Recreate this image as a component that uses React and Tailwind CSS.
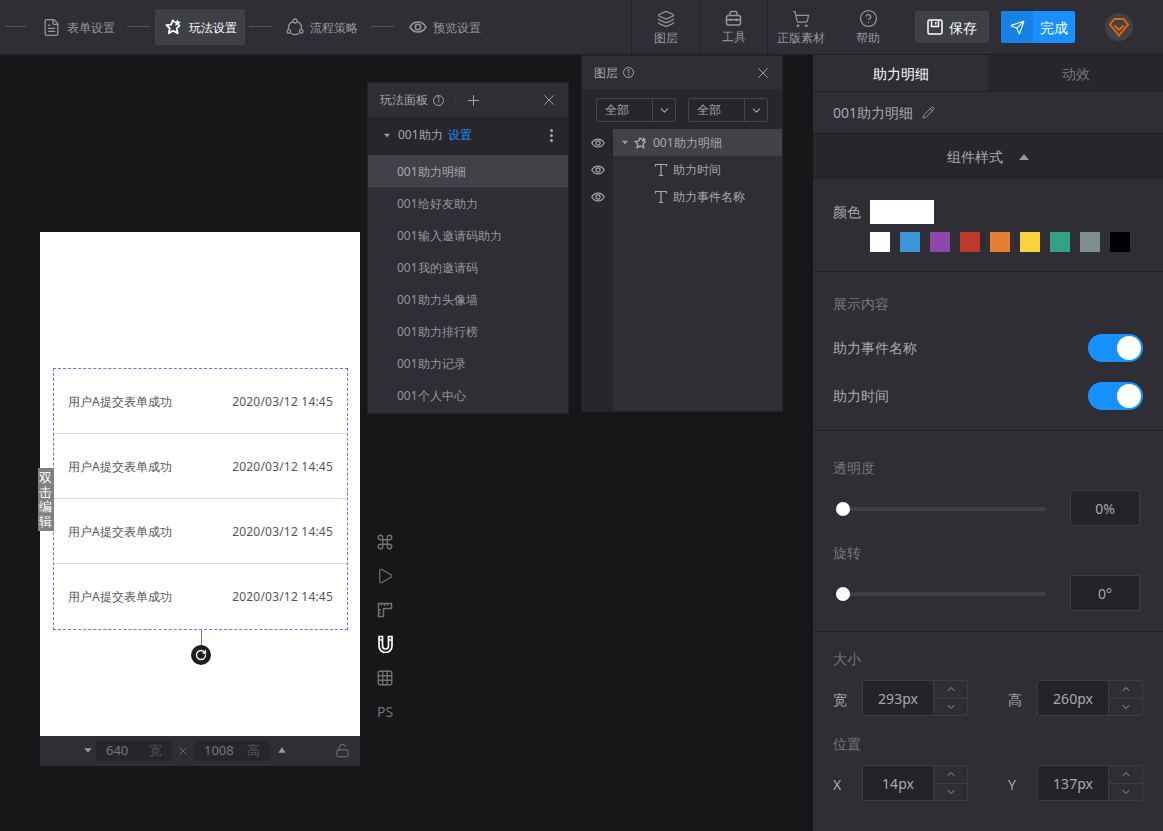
import { ChevronDown, ChevronUp, CircleHelp, Command, FileText, Grid3x3, Layers, LockOpen, Pencil, Play, Plus, RotateCw, Send, ShoppingCart, X } from 'lucide-react'

const FONT = "font-['Liberation_Sans','Noto_Sans_CJK_SC',sans-serif]"

const STEPS = [
  { label: '表单设置', icon: <FileText size={19} strokeWidth={1.6} />, x: 42 },
  { label: '玩法设置', icon: <StarIcon size={18} />, x: 165, active: true },
  { label: '流程策略', icon: <FlowIcon />, x: 286 },
  { label: '预览设置', icon: <EyeIcon size={18} />, x: 409 },
]

const TOOLS = [
  { label: '图层', icon: <Layers size={18} strokeWidth={1.6} />, w: 'w-[68px]' },
  { label: '工具', icon: <ToolboxIcon />, w: 'w-[68px]' },
  { label: '正版素材', icon: <ShoppingCart size={18} strokeWidth={1.6} />, w: 'w-[67px]' },
  { label: '帮助', icon: <CircleHelp size={19} strokeWidth={1.6} />, w: 'w-[68px]' },
]

const PLAYS = ['001给好友助力', '001输入邀请码助力', '001我的邀请码', '001助力头像墙', '001助力排行榜', '001助力记录', '001个人中心']

const SWATCHES = ['bg-white', 'bg-[#3b97d8]', 'bg-[#8e48ac]', 'bg-[#bf392c]', 'bg-[#e67e2f]', 'bg-[#fed23f]', 'bg-[#35a085]', 'bg-[#7f8d8d]', 'bg-black']

function StarIcon({ size }) {
  return (
    <svg width={size} height={size} viewBox="0 0 18 18" fill="none" stroke="currentColor" strokeWidth="1.8" strokeLinejoin="round">
      <path d="M9.5 4.2 7.8 2.4 6 6.6 1.4 7.1 4.8 10.3 3.8 15.3 8.2 12.8 12.6 15.3 11.7 10.3 15 7.2" />
      <path d="M12.4 1.4 13.4 3.6 15.9 3.9 14.1 5.6 14.6 8 12.4 6.8 10.2 8 10.7 5.6 8.9 3.9 11.4 3.6z" fill="currentColor" stroke="none" />
    </svg>
  )
}

function EyeIcon({ size }) {
  return (
    <svg width={size} height={size} viewBox="0 0 18 18" fill="none" stroke="currentColor" strokeWidth="1.5">
      <path d="M1 9c2-3.4 4.700-5 8-5s6 1.600 8 5c-2 3.400-4.700 5-8 5s-6-1.600-8-5z" />
      <circle cx="9" cy="9" r="2.700" />
    </svg>
  )
}

function FlowIcon() {
  return (
    <svg width="18" height="18" viewBox="0 0 18 18" fill="none" stroke="currentColor" strokeWidth="1.3">
      <path d="M6.600 3.600A6.800 6.800 0 0 0 2.600 11" />
      <path d="M11.400 3.600A6.800 6.800 0 0 1 15.400 11" />
      <path d="M5 15.200a7 7 0 0 0 8 0" />
      <circle cx="9" cy="3" r="2" />
      <circle cx="2.800" cy="13.400" r="1.800" />
      <circle cx="15.200" cy="13.400" r="1.800" />
    </svg>
  )
}

function ToolboxIcon() {
  return (
    <svg width="17" height="17" viewBox="0 0 17 17" fill="none" stroke="currentColor" strokeWidth="1.500">
      <rect x="1.500" y="5.500" width="14" height="9.500" rx="2" />
      <path d="M5 5.500V3.200A1.700 1.700 0 0 1 6.700 1.500h3.600A1.700 1.700 0 0 1 12 3.200v2.300" />
      <path d="M1.500 9.700h14M5.500 8.500v2.400M11.500 8.500v2.400" />
    </svg>
  )
}

function SaveIcon() {
  return (
    <svg width="16" height="16" viewBox="0 0 16 16" fill="none" stroke="currentColor" strokeWidth="1.500">
      <path d="M2.500 1h11A1.500 1.500 0 0 1 15 2.500v11a1.500 1.500 0 0 1-1.500 1.500h-11A1.500 1.500 0 0 1 1 13.500v-11A1.500 1.500 0 0 1 2.500 1z" />
      <path d="M4.500 1v6.500h7V1" />
      <path d="M8.800 3v2.500" />
    </svg>
  )
}

function LogoIcon() {
  return (
    <svg width="22" height="22" viewBox="0 0 22 22" fill="none" stroke="#e8650f" strokeWidth="1.900" strokeLinejoin="miter">
      <path d="M6.500 3h9L20 8.500 11 19.500 2 8.500z" />
      <path d="M6.500 9.500 11 14l4.500-4.500" />
    </svg>
  )
}

function RulerIcon() {
  return (
    <svg width="16" height="18" viewBox="0 0 16 18" fill="none" stroke="currentColor" strokeWidth="1.500">
      <path d="M1.500 2.500h13v5H6.500v8h-5z" />
      <path d="M4.500 2.500v2M7.500 2.500v2.500M10.500 2.500v2M1.500 9h2.500M1.500 12h2" />
    </svg>
  )
}

function MagnetIcon() {
  return (
    <svg width="15" height="18" viewBox="0 0 15 18" fill="none" stroke="currentColor" strokeWidth="1.700">
      <path d="M1 1.500h3.500v9.500a3 3 0 0 0 6 0V1.500H14v9.500a6.500 6.500 0 0 1-13 0z" />
      <path d="M1 5h3.500M10.500 5H14" />
    </svg>
  )
}

function TextIcon() {
  return (
    <svg width="14" height="14" viewBox="0 0 14 14" fill="none" stroke="currentColor" strokeWidth="1.200">
      <path d="M1.500 3.500V1.500h11v2M7 1.500v11M4.800 12.500h4.400" />
    </svg>
  )
}

function Caret({ up, className = '' }) {
  return (
    <span className={`inline-block w-0 h-0 border-x-[4px] border-x-transparent ${up ? 'border-b-[6px] border-b-[#9a9a9e]' : 'border-t-[5px] border-t-[#9a9a9e]'} ${className}`} />
  )
}

function InfoDot() {
  return (
    <span className="w-[11px] h-[11px] rounded-full border border-[#a5a5a8] flex items-center justify-center text-[8px] leading-none text-[#a5a5a8]">1</span>
  )
}

function Toggle({ label, y }) {
  return (
    <div className="absolute left-[20px] right-[20px] flex items-center justify-between" style={{ top: y }}>
      <span className="text-[14px] text-[#a9a9ac] -mt-[2px]">{label}</span>
      <span className="w-[55px] h-[28px] rounded-full bg-[#1890ff] relative">
        <span className="absolute right-[2px] top-[2px] w-[24px] h-[24px] rounded-full bg-white" />
      </span>
    </div>
  )
}

function SliderRow({ label, y, value }) {
  return (
    <>
      <span className="absolute left-[20px] text-[14px] text-[#77777b]" style={{ top: y - 2 }}>{label}</span>
      <div className="absolute left-[23px] w-[210px] h-[4px] rounded-full bg-[#3f3f45]" style={{ top: y + 48 }}>
        <span className="absolute left-0 -top-[5px] w-[14px] h-[14px] rounded-full bg-white" />
      </div>
      <div className="absolute left-[257px] w-[70px] h-[36px] bg-[#232328] border border-[#3d3d43] flex items-center justify-center text-[14px] text-[#a9a9ac]" style={{ top: y + 31 }}>
        {value}
      </div>
    </>
  )
}

function NumberBox({ value, x, y }) {
  return (
    <div className="absolute w-[106px] h-[36px] flex border border-[#3d3d43] rounded-[2px] overflow-hidden" style={{ left: x, top: y }}>
      <span className="w-[70px] bg-[#232328] flex items-center justify-center text-[14px] text-[#a9a9ac]">{value}</span>
      <span className="flex-1 flex flex-col border-l border-[#3d3d43] text-[#9a9a9e]">
        <span className="flex-1 flex items-center justify-center border-b border-[#3d3d43]"><ChevronUp size={12} /></span>
        <span className="flex-1 flex items-center justify-center"><ChevronDown size={12} /></span>
      </span>
    </div>
  )
}

function PhoneRow({ last }) {
  return (
    <div className={`h-[65px] flex items-center justify-between pl-[14px] pr-[14px] text-[12px] text-[#555555] ${last ? '' : 'pt-px border-b border-[#d9d9d9]'}`}>
      <span>用户A提交表单成功</span>
      <span className="tracking-[0.2px]">2020/03/12 14:45</span>
    </div>
  )
}

function SelectBox({ x }) {
  return (
    <div className="absolute top-[42px] w-[80px] h-[24px] flex border border-[#45454a] rounded-[2px] text-[12px] text-[#a9a9ac]" style={{ left: x }}>
      <span className="w-[55px] pl-[8px] flex items-center">全部</span>
      <span className="flex-1 border-l border-[#45454a] flex items-center justify-center"><ChevronDown size={13} /></span>
    </div>
  )
}

export default function App() {
  return (
    <div className={`relative w-[1163px] h-[831px] overflow-hidden bg-[#17171a] ${FONT}`}>
      {/* top bar */}
      <header className="absolute left-0 top-0 w-full h-[55px] bg-[#2e2e34] border-b border-[#1f1f23]">
        <span className="absolute left-[5px] top-[26px] w-[21px] h-px bg-[#55555a]" />
        <span className="absolute left-[127px] top-[26px] w-[23px] h-px bg-[#55555a]" />
        <span className="absolute left-[249px] top-[26px] w-[23px] h-px bg-[#55555a]" />
        <span className="absolute left-[371px] top-[26px] w-[23px] h-px bg-[#55555a]" />
        <div className="absolute left-[155px] top-[9px] w-[90px] h-[36px] rounded-[2px] bg-[#3f4046]" />
        {STEPS.map(s => (
          <div
            key={s.label}
            className={`absolute top-[17px] flex items-center gap-[6px] text-[12px] ${s.active ? 'text-white' : 'text-[#98989b]'}`}
            style={{ left: s.x }}
          >
            {s.icon}
            <span className="pt-[2px]">{s.label}</span>
          </div>
        ))}

        <div className="absolute left-[631px] top-0 h-[54px] flex">
          {TOOLS.map((t, i) => (
            <div key={t.label} className={`${t.w} flex flex-col items-center justify-center gap-[3px] text-[12px] leading-[14px] text-[#98989b] ${i === 3 ? '' : 'border-l border-[#232327]'}`}>
              {t.icon}
              <span>{t.label}</span>
            </div>
          ))}
        </div>

        <button className="absolute left-[915px] top-[11px] w-[74px] h-[32px] rounded-[2px] bg-[#3f4046] flex items-center justify-center gap-[6px] text-[14px] text-white">
          <SaveIcon />
          保存
        </button>
        <button className="absolute left-[1001px] top-[11px] w-[74px] h-[32px] rounded-[2px] bg-[#1890ff] flex items-center text-[14px] text-white overflow-hidden">
          <span className="w-[32px] h-full bg-[#1682e6] flex items-center justify-center"><Send size={15} strokeWidth={1.8} /></span>
          <span className="flex-1 text-center">完成</span>
        </button>
        <div className="absolute left-[1105px] top-[13px] w-[28px] h-[28px] rounded-full bg-[#414146] flex items-center justify-center">
          <LogoIcon />
        </div>
      </header>

      {/* canvas */}
      <div className="absolute left-[40px] top-[232px] w-[320px] h-[504px] bg-white">
        <div className="absolute left-[13px] top-[136px] w-[295px] h-[262px] border border-dashed border-[#9a5cf5]">
          <PhoneRow />
          <PhoneRow />
          <PhoneRow />
          <PhoneRow last />
        </div>
        <span className="absolute left-[161px] top-[398px] w-px h-[16px] bg-[#777777]" />
        <span className="absolute left-[151px] top-[413px] w-[20px] h-[20px] rounded-full bg-[#1f1d20] flex items-center justify-center text-white">
          <RotateCw size={12} strokeWidth={2.6} />
        </span>
      </div>
      <div className="absolute left-[38px] top-[468px] w-[16px] h-[63px] bg-[#808080] pl-px pt-[2px] text-[13px] leading-[14.5px] break-all text-white">
        双击编辑
      </div>
      <div className="absolute left-[40px] top-[736px] w-[320px] h-[30px] bg-[#2e2e34] text-[13px] text-[#77777b]">
        <Caret className="absolute left-[44px] top-[12px] scale-90" />
        <div className="absolute left-[56px] top-[5px] w-[76px] h-[20px] rounded-[2px] bg-[#26262b] flex items-center justify-between pl-[10px] pr-[10px]">
          <span>640</span><span className="text-[#55555a]">宽</span>
        </div>
        <X size={14} strokeWidth={1.3} className="absolute left-[136px] top-[8px]" />
        <div className="absolute left-[154px] top-[5px] w-[76px] h-[20px] rounded-[2px] bg-[#26262b] flex items-center justify-between pl-[10px] pr-[10px]">
          <span>1008</span><span className="text-[#55555a]">高</span>
        </div>
        <Caret up className="absolute left-[238px] top-[11px] scale-90" />
        <LockOpen size={15} strokeWidth={1.6} className="absolute left-[295px] top-[7px]" />
      </div>

      {/* side tools */}
      <div className="absolute left-[376px] top-[533px] flex flex-col items-center w-[18px] gap-[16px] text-[#727276]">
        <Command size={18} strokeWidth={1.8} />
        <Play size={18} strokeWidth={1.5} />
        <RulerIcon />
        <span className="text-white"><MagnetIcon /></span>
        <Grid3x3 size={18} strokeWidth={1.8} />
        <span className="text-[14px] leading-[18px]">PS</span>
      </div>

      {/* play panel */}
      <section className="absolute left-[367px] top-[82px] w-[202px] h-[332px] bg-[#2e2e34] border border-[#242428]">
        <div className="h-[34px] flex items-center pl-[12px] pr-[10px] gap-[5px] text-[12px] text-[#a9a9ac]">
          <span>玩法面板</span>
          <InfoDot />
          <span className="w-px h-[14px] bg-[#3d3d43] ml-[5px]" />
          <Plus size={17} strokeWidth={1.4} className="ml-[5px]" />
          <X size={18} strokeWidth={1.2} className="ml-auto" />
        </div>
        <div className="h-[38px] bg-[#26262b] flex items-center pl-[15px] pr-[15px] pb-[2px] text-[12px] text-[#a9a9ac]">
          <Caret className="scale-75 mr-[7px]" />
          <span>001助力</span>
          <span className="ml-[5px] text-[#1890ff]">设置</span>
          <span className="ml-auto flex flex-col gap-[2px]">
            <span className="w-[3px] h-[3px] rounded-full bg-[#a9a9ac]" />
            <span className="w-[3px] h-[3px] rounded-full bg-[#a9a9ac]" />
            <span className="w-[3px] h-[3px] rounded-full bg-[#a9a9ac]" />
          </span>
        </div>
        <div className="h-[32px] bg-[#414248] flex items-center pl-[29px] pt-[2px] text-[12px] text-[#a9a9ac]">001助力明细</div>
        {PLAYS.map(p => (
          <div key={p} className="h-[32px] flex items-center pl-[29px] pt-[2px] text-[12px] text-[#98989b]">{p}</div>
        ))}
      </section>

      {/* layer panel */}
      <section className="absolute left-[581px] top-[55px] w-[202px] h-[357px] bg-[#2e2e34] border border-[#242428]">
        <div className="h-[33px] flex items-center pl-[12px] pr-[10px] gap-[5px] text-[12px] text-[#a9a9ac]">
          <span>图层</span>
          <InfoDot />
          <X size={18} strokeWidth={1.2} className="ml-auto" />
        </div>
        <div className="absolute left-0 top-[33px] w-full h-[40px] bg-[#26262b]" />
        <SelectBox x={14} />
        <SelectBox x={106} />
        <div className="absolute left-0 top-[73px] bottom-0 w-[31px] bg-[#26262b] flex flex-col items-center text-[#a9a9ac]">
          <span className="h-[27px] flex items-center"><EyeIcon size={14} /></span>
          <span className="h-[27px] flex items-center"><EyeIcon size={14} /></span>
          <span className="h-[27px] flex items-center"><EyeIcon size={14} /></span>
        </div>
        <div className="absolute left-[31px] right-0 top-[73px] text-[12px] text-[#a9a9ac]">
          <div className="h-[27px] bg-[#414248] flex items-center pl-[8px] gap-[5px]">
            <Caret className="scale-75" />
            <StarIcon size={14} />
            <span>001助力明细</span>
          </div>
          <div className="h-[27px] flex items-center pl-[41px] gap-[5px]">
            <TextIcon />
            <span>助力时间</span>
          </div>
          <div className="h-[27px] flex items-center pl-[41px] gap-[5px]">
            <TextIcon />
            <span>助力事件名称</span>
          </div>
        </div>
      </section>

      {/* right panel */}
      <aside className="absolute left-[813px] top-[55px] w-[350px] h-[776px] bg-[#2e2e34]">
        <div className="h-[37px] flex border-b border-[#232327] text-[14px]">
          <span className="w-[175px] flex items-center justify-center text-white">助力明细</span>
          <span className="flex-1 bg-[#26262b] flex items-center justify-center text-[#77777b]">动效</span>
        </div>
        <div className="h-[42px] flex items-center gap-[9px] pl-[20px] border-b border-[#232327] text-[14px] text-[#a9a9ac]">
          <span>001助力明细</span>
          <Pencil size={13} strokeWidth={1.5} />
        </div>
        <div className="h-[45px] bg-[#26262b] flex items-center justify-center gap-[17px] pr-[2px] text-[14px] text-[#a9a9ac]">
          <span>组件样式</span>
          <Caret up className="mt-[1px] scale-x-125" />
        </div>

        <div className="relative h-[93px] border-b border-[#232327]">
          <span className="absolute left-[20px] top-[22px] text-[14px] text-[#a9a9ac]">颜色</span>
          <span className="absolute left-[57px] top-[21px] w-[64px] h-[24px] bg-white" />
          <div className="absolute left-[57px] top-[53px] flex gap-[10px]">
            {SWATCHES.map(c => <span key={c} className={`w-[20px] h-[20px] ${c}`} />)}
          </div>
        </div>

        <div className="relative h-[159px] border-b border-[#232327]">
          <span className="absolute left-[20px] top-[21px] text-[14px] text-[#77777b]">展示内容</span>
          <Toggle label="助力事件名称" y={62} />
          <Toggle label="助力时间" y={110} />
        </div>

        <div className="relative h-[201px] border-b border-[#232327]">
          <SliderRow label="透明度" y={28} value="0%" />
          <SliderRow label="旋转" y={113} value="0°" />
        </div>

        <div className="relative h-[198px]">
          <span className="absolute left-[20px] top-[16px] text-[14px] text-[#77777b]">大小</span>
          <span className="absolute left-[20px] top-[57px] text-[14px] text-[#a9a9ac]">宽</span>
          <NumberBox value="293px" x={49} y={48} />
          <span className="absolute left-[195px] top-[57px] text-[14px] text-[#a9a9ac]">高</span>
          <NumberBox value="260px" x={224} y={48} />
          <span className="absolute left-[20px] top-[101px] text-[14px] text-[#77777b]">位置</span>
          <span className="absolute left-[20px] top-[142px] text-[14px] text-[#a9a9ac]">X</span>
          <NumberBox value="14px" x={49} y={133} />
          <span className="absolute left-[195px] top-[142px] text-[14px] text-[#a9a9ac]">Y</span>
          <NumberBox value="137px" x={224} y={133} />
        </div>
      </aside>
    </div>
  )
}
